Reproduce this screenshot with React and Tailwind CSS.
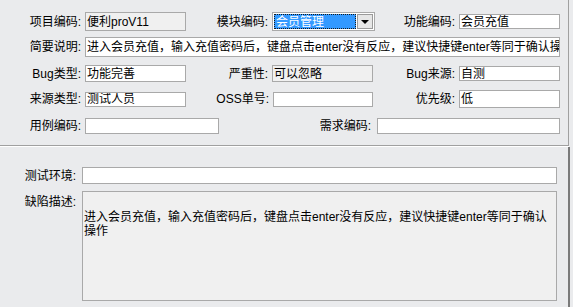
import React from 'react';

const FONT = { fontFamily: '"Liberation Sans", "Noto Sans CJK SC", sans-serif' };

// 单行文本框
function Field({ value = '', w, h, gray = false }) {
  return (
    <div
      className={`shrink-0 border border-[#a9a9a9] overflow-hidden whitespace-nowrap pl-[1px] text-[12px] leading-none flex items-center text-black ${gray ? 'bg-[#f0f0f0]' : 'bg-white'}`}
      style={{ width: w, height: h }}
    >
      {value}
    </div>
  );
}

function Label({ children, w, gap = 4 }) {
  return (
    <div className="shrink-0 text-right text-[12px] text-black leading-none whitespace-nowrap" style={{ width: w, paddingRight: gap }}>
      {children}
    </div>
  );
}

function ModuleSelect() {
  return (
    <div className="shrink-0 w-[103px] h-[19px] border border-[#a9a9a9] bg-white flex items-stretch p-[1px]">
      <div className="flex-1 bg-[#3399ff] border border-dotted border-[#1a1a1a] text-white text-[12px] leading-none flex items-center pl-[1px]">
        会员管理
      </div>
      <div className="w-[16px] ml-[1px] bg-[#e6e6e6] border border-[#9a9a9a] flex items-center justify-center">
        <div className="w-0 h-0 border-l-[4px] border-r-[4px] border-t-[4px] border-l-transparent border-r-transparent border-t-black" />
      </div>
    </div>
  );
}

export default function App() {
  const desc = '进入会员充值，输入充值密码后，键盘点击enter没有反应，建议快捷键enter等同于确认操作';

  return (
    <div className="w-[573px] h-[307px] bg-[#eaebed] overflow-hidden relative" style={FONT}>
      {/* 上部面板 */}
      <div className="w-[569px] h-[146px] border-r border-b border-[#a0a0a0] pt-[12px]">
        <div className="flex items-center h-[19px]">
          <Label w={85}>项目编码:</Label>
          <Field value="便利proV11" w={101} h={19} gray />
          <Label w={86}>模块编码:</Label>
          <ModuleSelect />
          <Label w={84}>功能编码:</Label>
          <Field value="会员充值" w={101} h={15} />
        </div>

        <div className="flex items-center h-[20px] mt-[6px]">
          <Label w={85}>简要说明:</Label>
          <Field value={desc} w={475} h={20} />
        </div>

        <div className="flex items-center h-[17px] mt-[8px]">
          <Label w={85}>Bug类型:</Label>
          <Field value="功能完善" w={101} h={17} />
          <Label w={86}>严重性:</Label>
          <Field value="可以忽略" w={101} h={17} gray />
          <Label w={86}>Bug来源:</Label>
          <Field value="自测" w={101} h={15} />
        </div>

        <div className="flex items-center h-[18px] mt-[8px]">
          <Label w={85}>来源类型:</Label>
          <Field value="测试人员" w={101} h={15} />
          <Label w={87}>OSS单号:</Label>
          <Field value="" w={100} h={15} />
          <Label w={86}>优先级:</Label>
          <Field value="低" w={101} h={18} />
        </div>

        <div className="flex items-center h-[16px] mt-[10px]">
          <Label w={85}>用例编码:</Label>
          <Field value="" w={134} h={16} />
          <Label w={158} gap={6}>需求编码:</Label>
          <Field value="" w={183} h={16} />
        </div>
      </div>
      <div className="w-[569px] h-[1px] bg-white" />

      {/* 下部面板 */}
      <div className="w-[570px] h-[160px] border-r-2 border-[#7a7a7a] pt-[20px]">
        <div className="flex items-center h-[17px]">
          <Label w={82} gap={6}>测试环境:</Label>
          <Field value="" w={475} h={17} />
        </div>
        <div className="flex items-start mt-[7px]">
          <div className="w-[82px] pr-[6px] pt-[5px] text-right text-[12px] leading-none text-black">缺陷描述:</div>
          <div className="w-[475px] h-[110px] border border-[#a9a9a9] bg-[#f0f0f0] pt-[18px] pl-[1px] text-[12px] leading-[14px] text-black">
            {desc}
          </div>
        </div>
      </div>
    </div>
  );
}
